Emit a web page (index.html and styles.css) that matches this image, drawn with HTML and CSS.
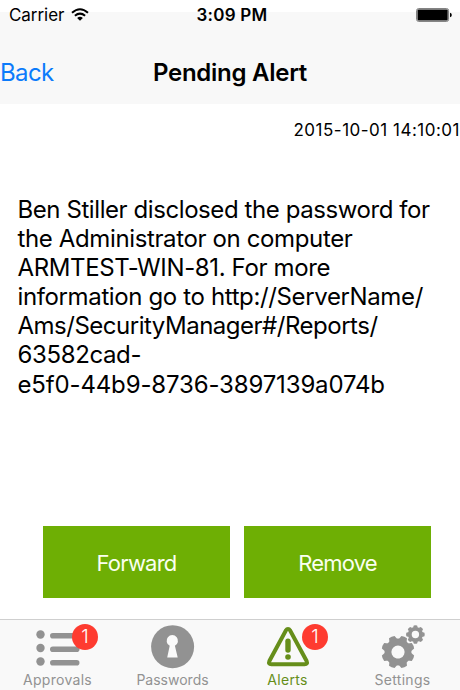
FILE: index.html
```
<!DOCTYPE html>
<html lang="en">
<head>
<meta charset="utf-8">
<title>Pending Alert</title>
<link rel="stylesheet" href="styles.css">
</head>
<body>
<div class="screen">
  <header class="header">
    <div class="status">
      <div class="carrier"><span class="carrier-name">Carrier</span>
        <svg class="wifi" width="18" height="13" viewBox="0 0 18 13" fill="none" stroke="#000" stroke-width="2"><path d="M1 4.8Q9-2.2 17 4.8M3.9 7.8Q9 3.4 14.1 7.8"/><path d="M6.1 9.9Q9 7.4 11.9 9.9L9 12.7Z" fill="#000" stroke="none"/></svg>
      </div>
      <span class="time">3:09 PM</span>
      <svg class="battery" width="36" height="14" viewBox="0 0 36 14"><rect x=".6" y=".6" width="32" height="12.8" rx="2" fill="#fff" stroke="#777"/><rect x="1.5" y="1.5" width="30.2" height="11" rx="1"/><path d="M34 4.7q1.8.5 1.8 2.3T34 9.3z"/></svg>
    </div>
    <nav class="nav">
      <a class="back">Back</a>
      <h1 class="title">Pending Alert</h1>
    </nav>
  </header>
  <main class="content">
    <time class="date">2015-10-01 14:10:01</time>
    <p class="message"><span class="line tight">Ben Stiller disclosed the password for</span><span class="line">the Administrator on computer</span><span class="line">ARMTEST-WIN-81. For more</span><span class="line">information go to http://ServerName/</span><span class="line tighter">Ams/SecurityManager#/Reports/</span><span class="line">63582cad-</span><span class="line digits">e5f0-44b9-8736-3897139a074b</span></p>
    <div class="actions">
      <button class="button">Forward</button>
      <button class="button">Remove</button>
    </div>
  </main>
  <footer class="tabs">
    <div class="tab">
      <svg class="icon" width="44" height="44" viewBox="0 0 44 44"><g fill="#929292"><circle cx="4.5" cy="9.5" r="4.2"/><circle cx="4.5" cy="23" r="4.2"/><circle cx="4.5" cy="36.5" r="4.2"/><rect x="14" y="8" width="29.5" height="5.6" rx="2.8"/><rect x="14" y="21.5" width="29.5" height="5.6" rx="2.8"/><rect x="14" y="35" width="29.5" height="5.6" rx="2.8"/></g></svg>
      <span class="label">Approvals</span><span class="badge">1</span>
    </div>
    <div class="tab">
      <svg class="icon" width="44" height="44" viewBox="0 0 44 44"><circle cx="21.6" cy="21.7" r="21.5" fill="#929292"/><path d="M18.7 20.8A5.7 5.7 0 1 1 23.9 20.8L26.7 32.6H16.2Z" fill="#fafafa"/></svg>
      <span class="label snug">Passwords</span>
    </div>
    <div class="tab active">
      <svg class="icon" width="44" height="44" viewBox="0 0 44 44"><path d="M19.7 5.7Q22 2.5 24.3 5.7L40.6 36Q42 39.2 38.6 39.2H5.4Q2 39.2 3.4 36Z" fill="none" stroke="#668e1a" stroke-width="4"/><path d="M22 16.3V25" stroke="#668e1a" stroke-width="5.4" stroke-linecap="round"/><circle cx="22" cy="32" r="2.8" fill="#668e1a"/></svg>
      <span class="label">Alerts</span><span class="badge">1</span>
    </div>
    <div class="tab">
      <svg class="icon" width="44" height="44" viewBox="0 0 44 44">
        <defs><g id="gear"><circle r="10" fill="none" stroke="#929292" stroke-width="6.8"/><g id="teeth" fill="#929292"><path id="tooth" d="M-4.3-12L-3-16.2Q0-17.1 3-16.2L4.3-12Z"/><use href="#tooth" transform="rotate(45)"/><use href="#tooth" transform="rotate(90)"/><use href="#tooth" transform="rotate(135)"/></g><use href="#teeth" transform="rotate(180)"/></g></defs>
        <use href="#gear" transform="translate(17 27) rotate(22.5)"/>
        <use href="#gear" transform="translate(34.4 9.5) scale(.56)"/>
      </svg>
      <span class="label">Settings</span>
    </div>
  </footer>
</div>
</body>
</html>
```
FILE: styles.css
```
* { box-sizing: border-box; }
body { margin: 0; background: #fff; color: #000; font-family: Inter, "Liberation Sans", sans-serif; }
.screen { width: 460px; height: 690px; display: flex; flex-direction: column; overflow: hidden; }
.header { height: 104px; background: linear-gradient(#fff 12px, #f8f8f8 12px); }
.status { height: 30px; display: grid; grid-template-columns: 1fr auto 1fr; align-items: center; padding: 0 8px 0 9px; }
.carrier { display: flex; align-items: center; gap: 8px; }
.carrier-name { font-size: 17px; letter-spacing: -.05px; }
.wifi { margin: -2px 0 0 -1px; }
.time { font-size: 17px; font-weight: 600; letter-spacing: .25px; padding-left: 3px; }
.battery { justify-self: end; }
.nav { height: 74px; display: grid; grid-template-columns: 1fr auto 1fr; align-items: center; padding-top: 10px; }
.back { color: #0c7bfb; font-size: 24px; letter-spacing: -.6px; }
.title { margin: 0; font-size: 24px; font-weight: 600; letter-spacing: -.26px; }
.content { flex: 1; display: flex; flex-direction: column; }
.date { align-self: flex-end; margin-top: 16px; font-size: 17px; line-height: 21px; letter-spacing: .5px; }
.message { margin: 54px 0 0 17.5px; font-size: 24px; line-height: 29.1px; letter-spacing: -.37px; white-space: nowrap; }
.line { display: block; }
.tight { letter-spacing: -.42px; }
.tighter { letter-spacing: -.49px; }
.digits { letter-spacing: -.15px; }
.actions { display: flex; gap: 14px; margin: auto 29px 21px 43px; }
.button { flex: 1; height: 72px; border: 0; padding: 1px 0 0; background: #6eaf04; color: #fafff0; font: 22px Inter, "Liberation Sans", sans-serif; letter-spacing: -.8px; }
.tabs { height: 71px; border-top: 1px solid #cfcfcf; background: #f9f9f9; display: flex; }
.tab { flex: 1; position: relative; display: flex; flex-direction: column; align-items: center; padding-top: 5px; color: #929292; }
.active { color: #668e1a; }
.icon { display: block; }
.label { font-size: 14px; line-height: 18px; margin-top: 2px; letter-spacing: .3px; }
.snug { letter-spacing: 0; }
.badge { position: absolute; left: 72px; top: 4px; width: 26px; height: 26px; border-radius: 50%; background: #fe3b30; color: #fff; font-size: 19px; font-weight: 300; line-height: 26px; text-align: center; }
```
